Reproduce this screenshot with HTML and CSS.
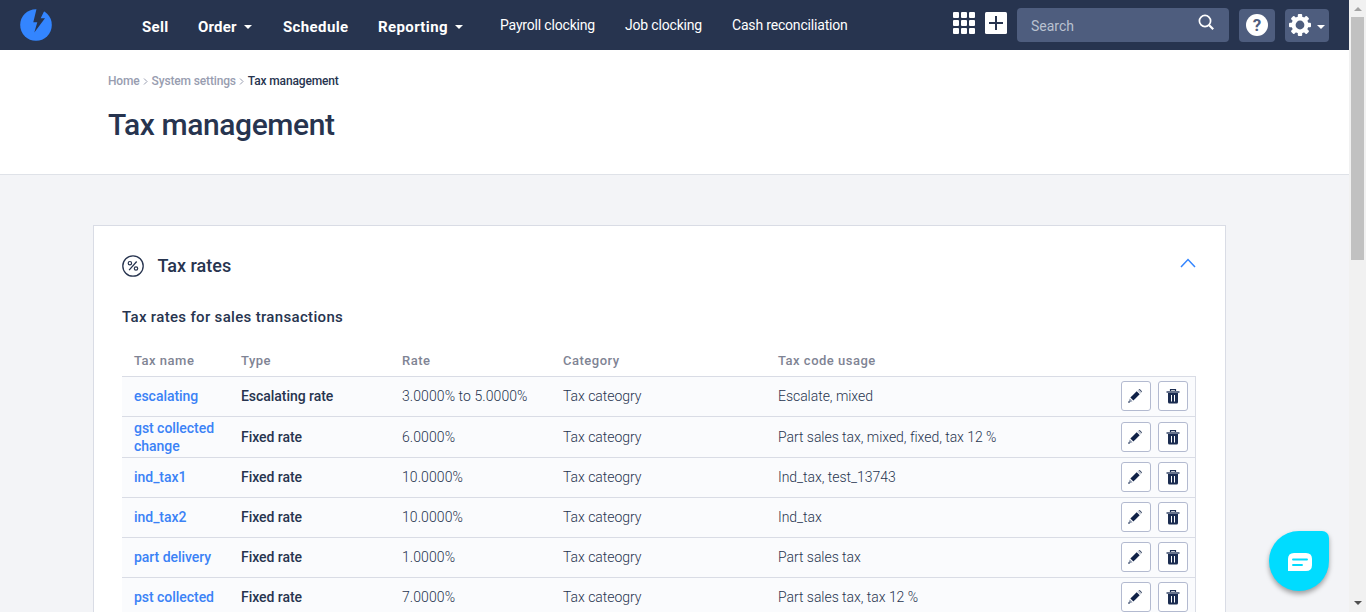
FILE: index.html
```
<!DOCTYPE html>
<html lang="en">
<head>
<meta charset="utf-8">
<title>Tax management</title>
<link rel="stylesheet" href="styles.css">
</head>
<body>
<svg class="defs" width="0" height="0" aria-hidden="true">
  <symbol id="pencil" viewBox="0 0 16 16">
    <path d="M3.400 9.600 9.700 3.300l3 3-6.300 6.300z" fill="#0f2147"/>
    <path d="M2.700 10.400 5.600 13.300 1.300 14.700z" fill="#8c97ac"/>
    <path d="M1.800 12.900 3.100 14.200 1.200 14.800z" fill="#0f2147"/>
    <path d="M10.300 2.700 11.700 1.300l3 3-1.400 1.400z" fill="#c5cad5"/>
    <path d="M11.700 1.300q.7-.5 1.300 0L14.700 3q.5.600 0 1.300z" fill="#33415f"/>
  </symbol>
  <symbol id="trash" viewBox="0 0 14 16">
    <path d="M4.500 3V1.600h5V3" fill="none" stroke="#1b2c50" stroke-width="1.200"/>
    <path d="M.5 3h13v2H.5z" fill="#66728c"/>
    <path d="M2 5h10v9q0 1.500-1.500 1.500h-7Q2 15.500 2 14z" fill="#1b2c50"/>
    <path d="M5.500 7v6.500M8.500 7v6.500" stroke="#fff" stroke-width="1"/>
  </symbol>
</svg>
<div class="app">
  <div class="page">
    <header class="topbar">
      <svg class="logo" width="32" height="32" viewBox="0 0 32 32"><circle cx="16" cy="16" r="15.800" fill="#3385ff"/><path d="M16.500 0 13.300 13.300h4L14.300 23.500 25 9.200h-4.300L24.200 2 21 0z" fill="#27344f"/></svg>
      <nav class="nav">
        <a class="main sell">Sell</a><a class="main order">Order<i class="caret"></i></a><a class="main schedule">Schedule</a><a class="main reporting">Reporting<i class="caret"></i></a><a class="sub payroll">Payroll clocking</a><a class="sub job">Job clocking</a><a class="sub cash">Cash reconciliation</a>
      </nav>
      <div class="tools">
        <svg class="apps" width="22" height="22" viewBox="0 0 22 22" fill="#fff"><rect width="6" height="6" rx="1"/><rect x="8" width="6" height="6" rx="1"/><rect x="16" width="6" height="6" rx="1"/><rect y="8" width="6" height="6" rx="1"/><rect x="8" y="8" width="6" height="6" rx="1"/><rect x="16" y="8" width="6" height="6" rx="1"/><rect y="16" width="6" height="6" rx="1"/><rect x="8" y="16" width="6" height="6" rx="1"/><rect x="16" y="16" width="6" height="6" rx="1"/></svg>
        <svg class="plus" width="22" height="22" viewBox="0 0 22 22"><rect width="22" height="22" rx="1.500" fill="#fff"/><path d="M11 4v14M4 11h14" stroke="#27344f" stroke-width="2"/></svg>
        <div class="search"><span>Search</span><svg width="17" height="17" viewBox="0 0 17 17" fill="none" stroke="#fff"><circle cx="7" cy="7" r="5.600" stroke-width="1.700"/><path d="m11.200 11.200 4 4" stroke-width="2.200"/></svg></div>
        <div class="tool help"><span>?</span></div>
        <div class="tool gear"><svg width="22" height="22" viewBox="-11 -11 22 22"><g fill="#fff"><rect id="tooth" x="-2.200" y="-11" width="4.400" height="22" rx="1"/><use href="#tooth" transform="rotate(45)"/><use href="#tooth" transform="rotate(90)"/><use href="#tooth" transform="rotate(135)"/></g><circle r="6.500" fill="none" stroke="#fff" stroke-width="4"/><circle r="4.400" fill="#4e5d7e"/></svg><i class="caret"></i></div>
      </div>
    </header>
    <section class="heading">
      <div class="crumbs"><span>Home</span><svg width="5" height="7" viewBox="0 0 5 7"><path d="m1 .5 3 3-3 3"/></svg><span class="settings">System settings</span><svg width="5" height="7" viewBox="0 0 5 7"><path d="m1 .5 3 3-3 3"/></svg><b>Tax management</b></div>
      <h1>Tax management</h1>
    </section>
    <main class="card">
      <div class="card-head">
        <svg class="percent" width="22" height="22" viewBox="0 0 22 22" fill="none" stroke="#27344f"><circle cx="11" cy="11" r="10.200" stroke-width="1.300"/><circle cx="7.900" cy="8.200" r="1.700" stroke-width="1.200"/><circle cx="14" cy="13.500" r="1.700" stroke-width="1.200"/><path d="m14.700 6.500-7.600 8.600" stroke-width="1.300"/></svg>
        <h2>Tax rates</h2>
        <svg class="chevron" width="16" height="10" viewBox="0 0 16 10"><path d="M1 9l7-7.500L15 9" fill="none" stroke="#3385ff" stroke-width="1.500"/></svg>
      </div>
      <h3>Tax rates for sales transactions</h3>
      <div class="table">
        <div class="row thead"><span>Tax name</span><span>Type</span><span>Rate</span><span>Category</span><span>Tax code usage</span></div>
        <div class="row"><a>escalating</a><b>Escalating rate</b><span class="rate">3.0000% to 5.0000%</span><span>Tax cateogry</span><span>Escalate, mixed</span><div class="acts"><button><svg><use href="#pencil"/></svg></button><button><svg class="bin"><use href="#trash"/></svg></button></div></div>
        <div class="row tall"><a>gst collected change</a><b>Fixed rate</b><span class="rate">6.0000%</span><span>Tax cateogry</span><span>Part sales tax, mixed, fixed, tax 12 %</span><div class="acts"><button><svg><use href="#pencil"/></svg></button><button><svg class="bin"><use href="#trash"/></svg></button></div></div>
        <div class="row"><a>ind_tax1</a><b>Fixed rate</b><span class="rate">10.0000%</span><span>Tax cateogry</span><span>Ind_tax, test_13743</span><div class="acts"><button><svg><use href="#pencil"/></svg></button><button><svg class="bin"><use href="#trash"/></svg></button></div></div>
        <div class="row"><a>ind_tax2</a><b>Fixed rate</b><span class="rate">10.0000%</span><span>Tax cateogry</span><span>Ind_tax</span><div class="acts"><button><svg><use href="#pencil"/></svg></button><button><svg class="bin"><use href="#trash"/></svg></button></div></div>
        <div class="row"><a>part delivery</a><b>Fixed rate</b><span class="rate">1.0000%</span><span>Tax cateogry</span><span>Part sales tax</span><div class="acts"><button><svg><use href="#pencil"/></svg></button><button><svg class="bin"><use href="#trash"/></svg></button></div></div>
        <div class="row"><a>pst collected</a><b>Fixed rate</b><span class="rate">7.0000%</span><span>Tax cateogry</span><span>Part sales tax, tax 12 %</span><div class="acts"><button><svg><use href="#pencil"/></svg></button><button><svg class="bin"><use href="#trash"/></svg></button></div></div>
      </div>
    </main>
  </div>
  <div class="scrollbar"><i class="arrow up"></i><i class="thumb"></i><i class="arrow down"></i></div>
  <div class="chat"><svg width="24" height="18" viewBox="0 0 24 18"><path d="M6 0h12q6 0 6 6v6q0 6-6 6H0V6q0-6 6-6z" fill="#fff"/><path d="M5 6.500h14M5 12h9" stroke="#00dcff" stroke-width="1.900" stroke-linecap="round"/></svg></div>
</div>
</body>
</html>
```
FILE: styles.css
```
* { box-sizing: border-box; }
body { margin: 0; font-family: Roboto, "Liberation Sans", sans-serif; font-size: 14px; color: #27344f; }
.defs { position: absolute; }
.app { position: relative; display: flex; width: 1366px; height: 612px; overflow: hidden; background: #f3f4f7; }
.page { flex: 1; min-width: 0; height: 612px; overflow: hidden; }

.topbar { display: flex; height: 50px; background: #27344f; color: #fff; }
.logo { margin: 9px 0 0 20px; flex: none; }
.nav { display: grid; grid-template-columns: 56px 85px 95px 122px 125px 107px 130px; margin-left: 90px; line-height: 20px; white-space: nowrap; }
.nav .main { padding-top: 17px; font-size: 15px; font-weight: 700; letter-spacing: .38px; }
.nav .order { letter-spacing: .2px; }
.nav .sell { letter-spacing: .3px; }
.nav .sub { padding-top: 15px; font-size: 14px; letter-spacing: -.18px; }
.caret { display: inline-block; border: 4px solid transparent; border-top-color: #fff; border-bottom: 0; margin-left: 7px; vertical-align: 3px; }
.tools { display: flex; margin-left: auto; padding: 8px 20px 0 0; }
.apps { margin-top: 4px; }
.plus { margin: 4px 0 0 10px; }
.search { display: flex; justify-content: space-between; width: 212px; height: 34px; margin-left: 10px; padding: 0 14px; border-radius: 4px; background: #4e5d7e; color: #b9c1d0; line-height: 36px; }
.search svg { margin-top: 6px; }
.tool { display: flex; align-items: center; height: 33px; margin: 1px 0 0 10px; border-radius: 4px; background: #4e5d7e; }
.help { width: 36px; justify-content: center; }
.help span { width: 22px; height: 22px; margin-bottom: 1px; border-radius: 50%; background: #fff; color: #4e5d7e; text-align: center; font-size: 17px; font-weight: 700; line-height: 22px; }
.gear { width: 44px; padding-left: 4px; }
.gear svg { margin-bottom: 1px; }
.gear .caret { margin: 3px 0 0 6px; }

.heading { height: 125px; padding: 22px 0 0 108px; border-bottom: 1px solid #dfe2e8; background: #fff; }
.crumbs { display: flex; align-items: center; height: 18px; color: #989db0; font-size: 12px; font-weight: 500; letter-spacing: -.15px; white-space: nowrap; }
.crumbs svg { margin: 0 4px 0 3px; fill: none; stroke: #989db0; }
.crumbs b { color: #27344f; font-weight: 500; }
h1 { margin: 15px 0 0; font-size: 30px; font-weight: 500; line-height: 40px; letter-spacing: -.4px; }

.card { width: 1133px; height: 500px; margin: 50px 0 0 93px; padding: 29px 29px 0 28px; border: 1px solid #d9dce5; background: #fff; }
.card-head { display: flex; height: 22px; }
.percent { margin: -.5px 0 0 -.5px; }
h2 { margin: 0 0 0 14px; font-size: 18px; font-weight: 500; line-height: 22px; }
.chevron { margin: 3px 0 0 auto; }
h3 { margin: 30px 0 0; font-size: 15px; font-weight: 500; line-height: 20px; letter-spacing: .33px; }
.table { margin-top: 18px; width: 1074px; }
.row { display: grid; grid-template-columns: 107px 161px 161px 215px 343px 75px; height: 40px; padding-left: 12px; border: solid #d9dce5; border-width: 1px 1px 0 0; background: #fafbfd; line-height: 18px; align-items: center; color: #27344f; font-weight: 300; letter-spacing: -.04px; }
.row > * { padding-bottom: 1px; }
.row b { color: #27344f; font-weight: 500; }
.row a { color: #3b82f6; font-weight: 500; padding-right: 20px; }
.row .rate { letter-spacing: .08px; }
.row.thead { height: 31px; border: 0; background: #fff; color: #7f8494; font-size: 13px; font-weight: 500; letter-spacing: .5px; }
.thead > * { padding: 1px 0 0; }
.row.tall { height: 41px; }
.row .acts { display: flex; gap: 7px; align-self: start; padding: 4px 0 0; }
.row.tall .acts { padding-top: 5px; }
button { display: flex; align-items: center; justify-content: center; width: 30px; height: 30px; padding: 0 2px 1px 0; border: 1px solid #b3bad0; border-radius: 3px; background: #fff; }
button svg { width: 16px; height: 16px; }
button .bin { width: 14px; margin-left: 2px; }

.scrollbar { display: flex; flex-direction: column; align-items: center; width: 17px; background: #f1f1f1; }
.arrow { border: 4px solid transparent; }
.up { border-top: 0; border-bottom-color: #a3a3a3; margin-top: 7px; }
.down { border-bottom: 0; border-top-color: #505050; margin: auto 0 7px; }
.thumb { width: 13px; height: 243px; margin-top: 6px; background: #c1c1c1; }
.chat { position: absolute; left: 1269px; top: 531px; display: flex; align-items: center; justify-content: center; width: 60px; height: 60px; padding: 2px 0 0 2px; border-radius: 30px 7px 30px 30px; background: #00dcff; box-shadow: 0 3px 5px rgba(0,0,0,.35); }
```
